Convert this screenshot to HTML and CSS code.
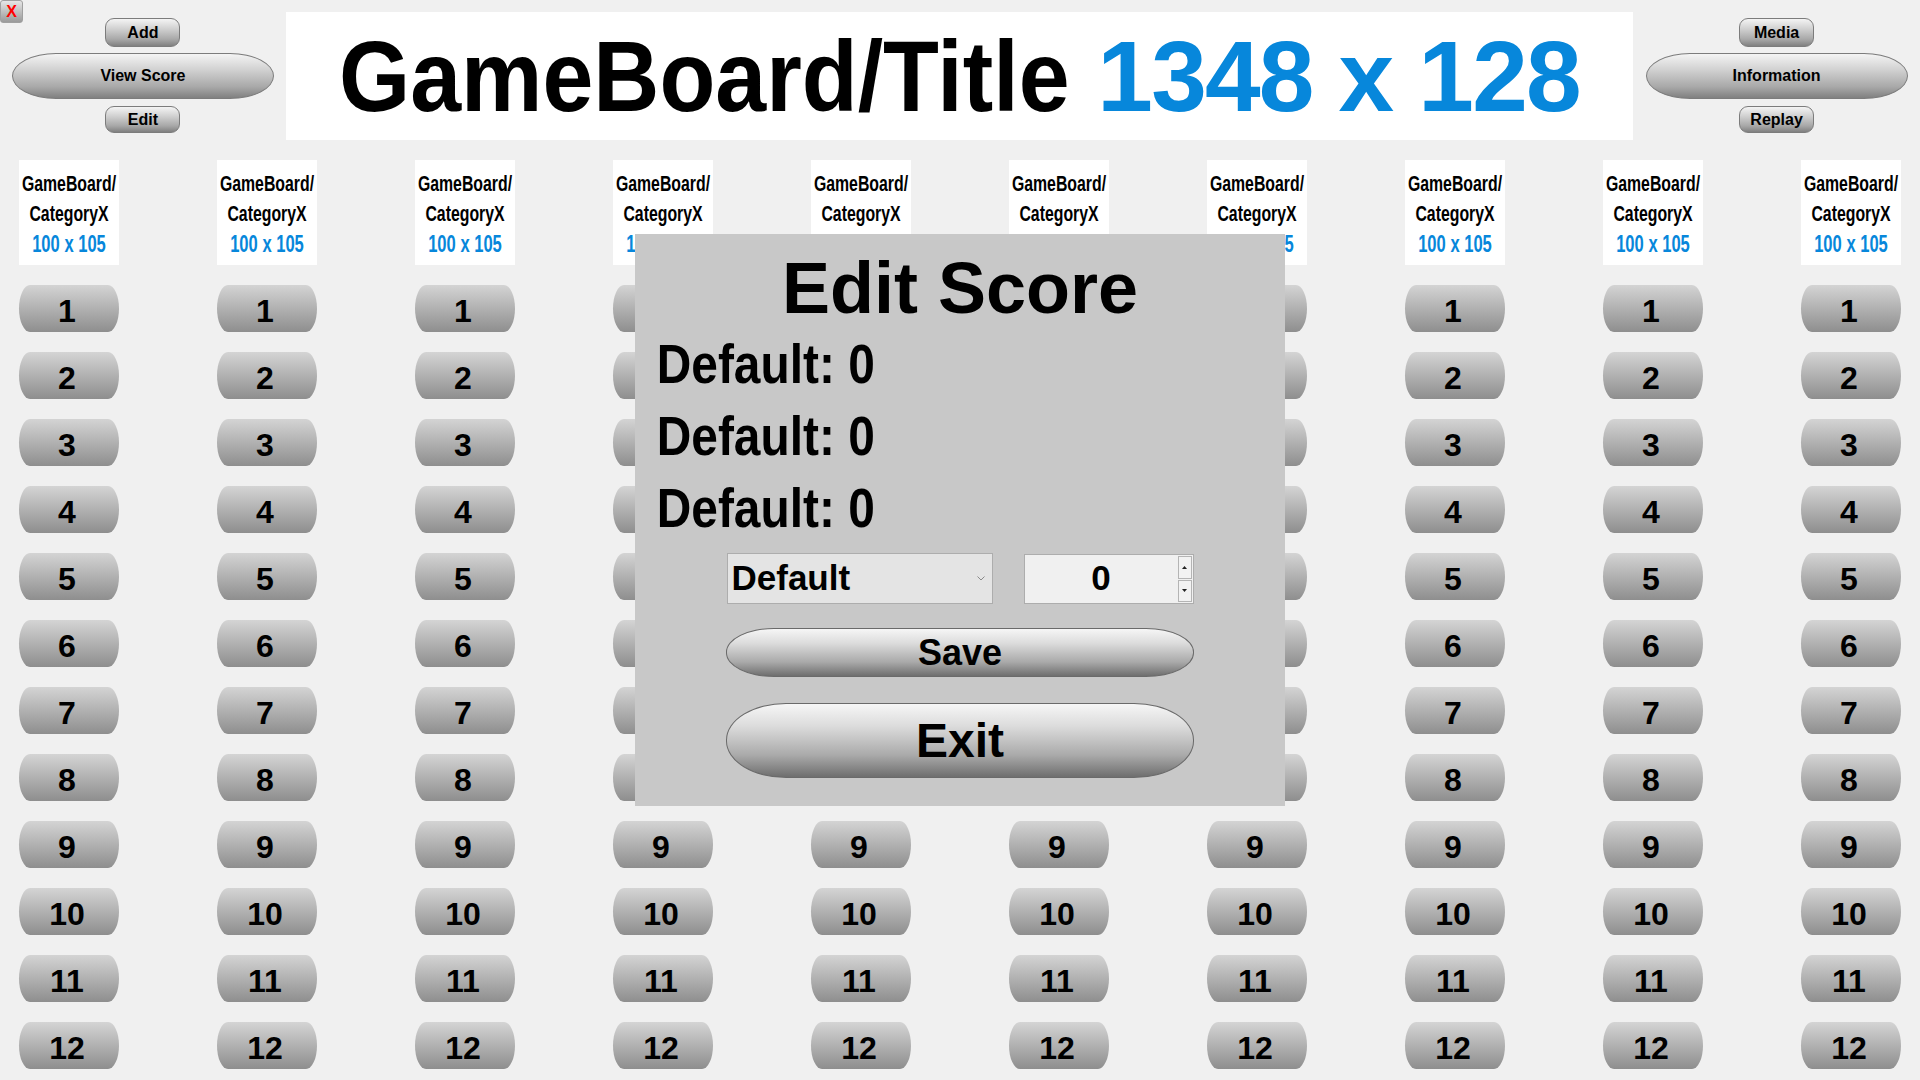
FILE: index.html
```html
<!DOCTYPE html>
<html>
<head>
<meta charset="utf-8">
<title>GameBoard</title>
<link rel="stylesheet" href="styles.css">
</head>
<body>
<div class="app">
  <div class="close-x">X</div>
  <header class="topbar">
    <div class="side">
      <div class="btn small">Add</div>
      <div class="btn wide">View Score</div>
      <div class="btn small edit">Edit</div>
    </div>
    <div class="title-box">
      <span class="title-main">GameBoard/Title</span> <span class="title-size">1348 x 128</span>
    </div>
    <div class="side">
      <div class="btn small">Media</div>
      <div class="btn wide">Information</div>
      <div class="btn small edit">Replay</div>
    </div>
  </header>

  <main class="board">
    <div class="col">
      <div class="cat"><div class="cat-text"><div>GameBoard/</div><div>CategoryX</div><div class="cat-size">100 x 105</div></div></div>
      <div class="num">1</div><div class="num">2</div><div class="num">3</div><div class="num">4</div><div class="num">5</div><div class="num">6</div><div class="num">7</div><div class="num">8</div><div class="num">9</div><div class="num">10</div><div class="num">11</div><div class="num">12</div>
    </div>
    <div class="col">
      <div class="cat"><div class="cat-text"><div>GameBoard/</div><div>CategoryX</div><div class="cat-size">100 x 105</div></div></div>
      <div class="num">1</div><div class="num">2</div><div class="num">3</div><div class="num">4</div><div class="num">5</div><div class="num">6</div><div class="num">7</div><div class="num">8</div><div class="num">9</div><div class="num">10</div><div class="num">11</div><div class="num">12</div>
    </div>
    <div class="col">
      <div class="cat"><div class="cat-text"><div>GameBoard/</div><div>CategoryX</div><div class="cat-size">100 x 105</div></div></div>
      <div class="num">1</div><div class="num">2</div><div class="num">3</div><div class="num">4</div><div class="num">5</div><div class="num">6</div><div class="num">7</div><div class="num">8</div><div class="num">9</div><div class="num">10</div><div class="num">11</div><div class="num">12</div>
    </div>
    <div class="col">
      <div class="cat"><div class="cat-text"><div>GameBoard/</div><div>CategoryX</div><div class="cat-size">100 x 105</div></div></div>
      <div class="num">1</div><div class="num">2</div><div class="num">3</div><div class="num">4</div><div class="num">5</div><div class="num">6</div><div class="num">7</div><div class="num">8</div><div class="num">9</div><div class="num">10</div><div class="num">11</div><div class="num">12</div>
    </div>
    <div class="col">
      <div class="cat"><div class="cat-text"><div>GameBoard/</div><div>CategoryX</div><div class="cat-size">100 x 105</div></div></div>
      <div class="num">1</div><div class="num">2</div><div class="num">3</div><div class="num">4</div><div class="num">5</div><div class="num">6</div><div class="num">7</div><div class="num">8</div><div class="num">9</div><div class="num">10</div><div class="num">11</div><div class="num">12</div>
    </div>
    <div class="col">
      <div class="cat"><div class="cat-text"><div>GameBoard/</div><div>CategoryX</div><div class="cat-size">100 x 105</div></div></div>
      <div class="num">1</div><div class="num">2</div><div class="num">3</div><div class="num">4</div><div class="num">5</div><div class="num">6</div><div class="num">7</div><div class="num">8</div><div class="num">9</div><div class="num">10</div><div class="num">11</div><div class="num">12</div>
    </div>
    <div class="col">
      <div class="cat"><div class="cat-text"><div>GameBoard/</div><div>CategoryX</div><div class="cat-size">100 x 105</div></div></div>
      <div class="num">1</div><div class="num">2</div><div class="num">3</div><div class="num">4</div><div class="num">5</div><div class="num">6</div><div class="num">7</div><div class="num">8</div><div class="num">9</div><div class="num">10</div><div class="num">11</div><div class="num">12</div>
    </div>
    <div class="col">
      <div class="cat"><div class="cat-text"><div>GameBoard/</div><div>CategoryX</div><div class="cat-size">100 x 105</div></div></div>
      <div class="num">1</div><div class="num">2</div><div class="num">3</div><div class="num">4</div><div class="num">5</div><div class="num">6</div><div class="num">7</div><div class="num">8</div><div class="num">9</div><div class="num">10</div><div class="num">11</div><div class="num">12</div>
    </div>
    <div class="col">
      <div class="cat"><div class="cat-text"><div>GameBoard/</div><div>CategoryX</div><div class="cat-size">100 x 105</div></div></div>
      <div class="num">1</div><div class="num">2</div><div class="num">3</div><div class="num">4</div><div class="num">5</div><div class="num">6</div><div class="num">7</div><div class="num">8</div><div class="num">9</div><div class="num">10</div><div class="num">11</div><div class="num">12</div>
    </div>
    <div class="col">
      <div class="cat"><div class="cat-text"><div>GameBoard/</div><div>CategoryX</div><div class="cat-size">100 x 105</div></div></div>
      <div class="num">1</div><div class="num">2</div><div class="num">3</div><div class="num">4</div><div class="num">5</div><div class="num">6</div><div class="num">7</div><div class="num">8</div><div class="num">9</div><div class="num">10</div><div class="num">11</div><div class="num">12</div>
    </div>
  </main>

  <section class="modal">
    <h1 class="modal-title">Edit Score</h1>
    <div class="score-line">Default: 0</div>
    <div class="score-line">Default: 0</div>
    <div class="score-line">Default: 0</div>
    <div class="controls">
      <div class="select">
        <span class="select-text">Default</span>
        <svg class="chev" width="8" height="5" viewBox="0 0 8 5"><path d="M0.5 0.5 L4 4 L7.5 0.5" fill="none" stroke="#8a8a8a" stroke-width="1"/></svg>
      </div>
      <div class="spin">
        <span class="spin-value">0</span>
        <div class="spin-btns">
          <div class="spin-btn"><svg width="5" height="3" viewBox="0 0 5 3"><path d="M0 3 L2.5 0 L5 3 Z" fill="#222"/></svg></div>
          <div class="spin-btn"><svg width="5" height="3" viewBox="0 0 5 3"><path d="M0 0 L2.5 3 L5 0 Z" fill="#222"/></svg></div>
        </div>
      </div>
    </div>
    <div class="pill save">Save</div>
    <div class="pill exit">Exit</div>
  </section>
</div>
</body>
</html>
```
FILE: styles.css
```css
* { box-sizing: border-box; }
html, body {
  margin: 0;
  padding: 0;
  background: #f0f0f0;
  font-family: "Liberation Sans", Arial, sans-serif;
  font-weight: bold;
  color: #000;
}
.app {
  position: relative;
  width: 1920px;
  height: 1080px;
  overflow: hidden;
}
.close-x {
  position: absolute;
  left: 0;
  top: 0;
  width: 23px;
  height: 23px;
  border-radius: 3px;
  background: linear-gradient(#e6e6e6, #9a9a9a);
  border: 1px solid #a0a0a0;
  color: #ff0000;
  font-size: 16px;
  line-height: 22px;
  text-align: center;
}
.topbar {
  display: flex;
  height: 140px;
}
.side {
  width: 286px;
  display: flex;
  flex-direction: column;
  align-items: center;
  padding-top: 18px;
}
.side:last-child { width: 287px; }
.btn {
  font-size: 16px;
  text-align: center;
  border: 1px solid #7c7c7c;
  background: linear-gradient(#f4f4f4 0%, #d2d2d2 35%, #a8a8a8 75%, #808080 100%);
  color: #000;
}
.btn.small {
  width: 75px;
  height: 29px;
  line-height: 27px;
  border-radius: 9px;
}
.btn.edit {
  height: 27px;
  line-height: 25px;
  margin-top: 7px;
}
.btn.wide {
  width: 262px;
  height: 46px;
  line-height: 44px;
  margin-top: 6px;
  border-radius: 44px / 23px;
}
.title-box {
  width: 1348px;
  height: 128px;
  margin-top: 12px;
  background: #fff;
  text-align: center;
  font-size: 100px;
  line-height: 128px;
  white-space: nowrap;
}
.title-main {
  display: inline-block;
  transform: scaleX(0.915);
  transform-origin: left center;
  margin-right: -68px;
}
.title-size { color: #0787db; letter-spacing: -1.8px; }

.board {
  display: grid;
  grid-template-columns: repeat(10, 100px);
  column-gap: 98px;
  padding-left: 19px;
  margin-top: 20px;
}
.col {
  display: flex;
  flex-direction: column;
  gap: 20px;
}
.cat {
  height: 105px;
  background: #fff;
  padding-top: 9px;
}
.cat-text {
  width: 140px;
  margin: 0 -20px;
  text-align: center;
  font-size: 22px;
  line-height: 29.5px;
  white-space: nowrap;
  transform: scaleX(0.72);
}
.cat-size { color: #0787db; font-size: 23px; margin-top: 2px; }
.num {
  height: 47px;
  border-radius: 11px / 50%;
  background: linear-gradient(#d4d4d4, #8e8e8e);
  text-align: center;
  font-size: 32px;
  padding-top: 6px;
  padding-right: 4px;
  line-height: 41px;
}

.modal {
  position: absolute;
  left: 635px;
  top: 234px;
  width: 650px;
  height: 572px;
  background: #c8c8c8;
  padding-top: 14px;
}
.modal-title {
  margin: 0;
  font-size: 72px;
  line-height: 80px;
  text-align: center;
}
.score-line {
  font-size: 55px;
  line-height: 72px;
  padding-left: 25px;
  transform: scaleX(0.87);
  transform-origin: left center;
  white-space: nowrap;
}
.controls {
  display: flex;
  justify-content: space-between;
  width: 467px;
  margin: 9px auto 0;
}
.select {
  position: relative;
  width: 266px;
  height: 51px;
  background: #e4e4e4;
  border: 1px solid #adadad;
  font-size: 35px;
  line-height: 47px;
  padding-left: 4px;
}
.chev {
  position: absolute;
  right: 7px;
  top: 22px;
}
.spin {
  display: flex;
  width: 170px;
  height: 50px;
  margin-top: 1px;
  background: #f0f0f0;
  border: 1px solid #adadad;
}
.spin-value {
  flex: 1;
  text-align: center;
  font-size: 35px;
  line-height: 46px;
}
.spin-btns {
  display: flex;
  flex-direction: column;
  gap: 1px;
  width: 15px;
  padding: 1px 1px 1px 0;
}
.spin-btn {
  flex: 1;
  display: flex;
  align-items: center;
  justify-content: center;
  background: #f2f2f2;
  border: 1px solid #b4b4b4;
}
.pill {
  width: 468px;
  margin: 0 auto;
  text-align: center;
  border: 1px solid #6a6a6a;
  background: linear-gradient(#f6f6f6 0%, #dcdcdc 30%, #aaaaaa 70%, #6e6e6e 100%);
}
.pill.save {
  height: 49px;
  margin-top: 24px;
  font-size: 36px;
  line-height: 47px;
  border-radius: 48px / 24px;
}
.pill.exit {
  height: 75px;
  margin-top: 26px;
  font-size: 48px;
  line-height: 73px;
  border-radius: 60px / 37px;
}
```
